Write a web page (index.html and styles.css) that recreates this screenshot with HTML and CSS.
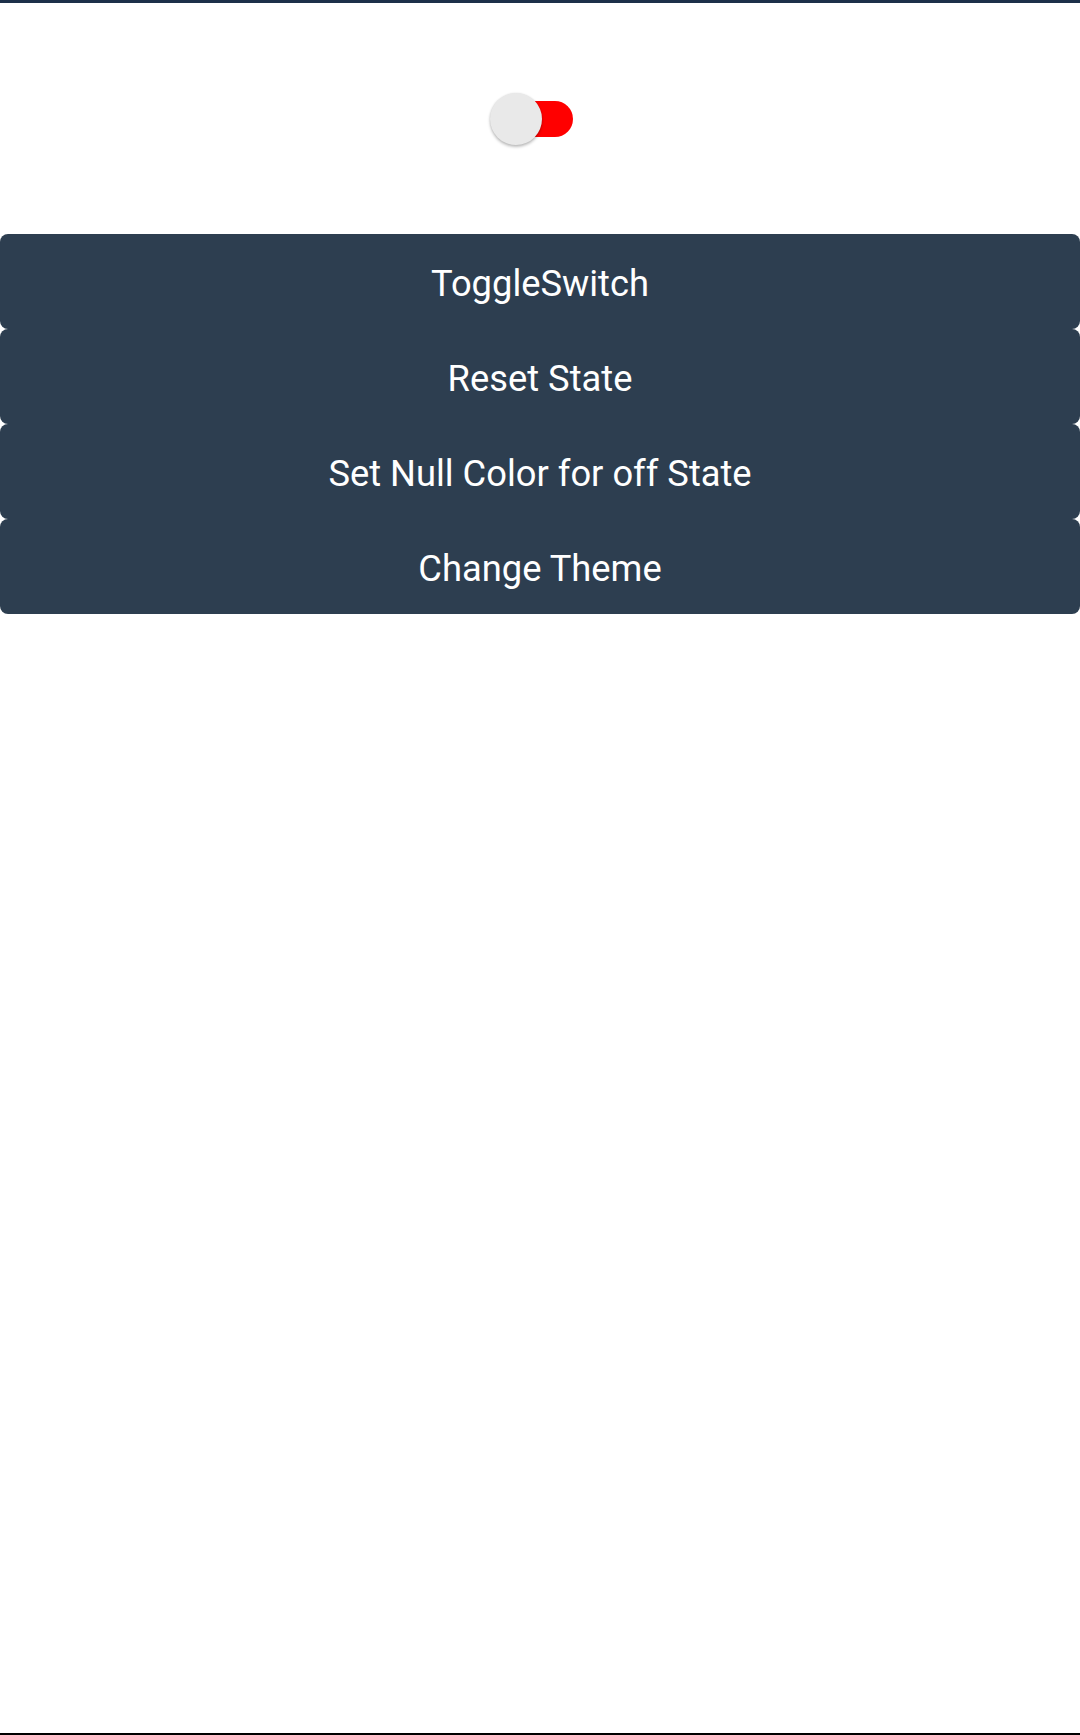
FILE: index.html
```html
<!DOCTYPE html>
<html>
<head>
<meta charset="utf-8">
<link rel="stylesheet" href="styles.css">
</head>
<body>
<div class="page">
  <div class="top-bar"></div>
  <main class="content">
    <div class="switch-area">
      <div class="switch">
        <div class="track"></div>
        <div class="knob"></div>
      </div>
    </div>
    <div class="buttons">
      <button class="btn">ToggleSwitch</button>
      <button class="btn">Reset State</button>
      <button class="btn">Set Null Color for off State</button>
      <button class="btn">Change Theme</button>
    </div>
  </main>
  <div class="bottom-line"></div>
</div>
</body>
</html>
```
FILE: styles.css
```css
html, body {
  margin: 0;
  padding: 0;
  background: #ffffff;
}
.page {
  display: flex;
  flex-direction: column;
  min-height: 1735px;
  font-family: Roboto, "Noto Sans", sans-serif;
}
.top-bar {
  height: 3px;
  background: #1c3049;
}
.content {
  flex: 1;
}
.switch-area {
  height: 231px;
  display: flex;
  justify-content: center;
  align-items: center;
}
.switch {
  position: relative;
  width: 83px;
  height: 56px;
  margin-left: -17px;
  margin-top: 1px;
}
.track {
  position: absolute;
  left: 13px;
  top: 10px;
  width: 70px;
  height: 36px;
  border-radius: 18px;
  background: #ff0000;
}
.knob {
  position: absolute;
  left: 0;
  top: 2px;
  width: 52px;
  height: 52px;
  border-radius: 50%;
  background: #e9e9e9;
  box-shadow: 0 2px 3px rgba(0, 0, 0, 0.25), 0 0 2px rgba(0, 0, 0, 0.1);
}
.buttons {
  display: flex;
  flex-direction: column;
}
.btn {
  height: 95px;
  border: none;
  border-radius: 8px;
  background: #2d3e50;
  color: #ffffff;
  font-family: Roboto, "Noto Sans", sans-serif;
  font-size: 36.3px;
  padding: 0;
  padding-top: 4px;
  margin: 0;
  width: 100%;
}
.bottom-line {
  height: 2px;
  background: #000000;
}
```
